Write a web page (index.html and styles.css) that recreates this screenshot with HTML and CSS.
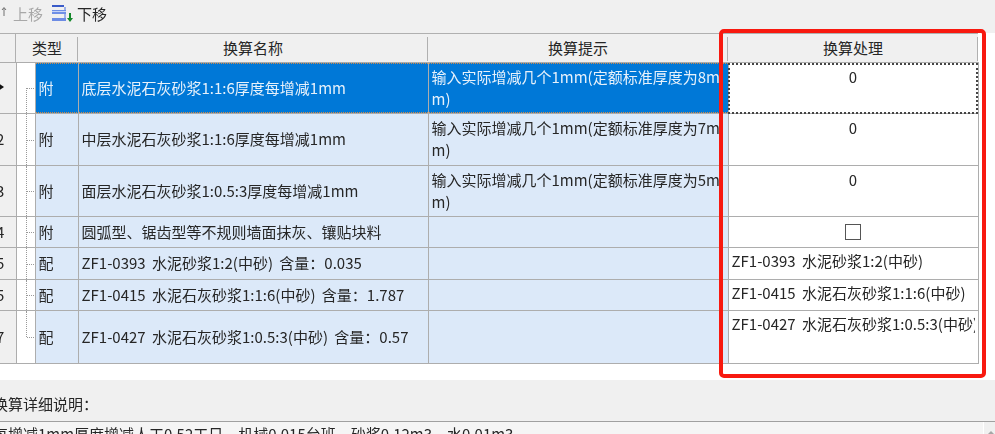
FILE: index.html
```html
<!DOCTYPE html>
<html lang="zh-CN">
<head>
<meta charset="utf-8">
<title>换算</title>
<link rel="stylesheet" href="styles.css">
</head>
<body>
<div class="toolbar">
  <svg class="tool-icon up" width="10" height="14" viewBox="0 0 10 14"><path d="M0 5h2v7H0z" fill="#c4c4c4"/><path d="M6 10V2M4 4l2-2.500 2 2.500" stroke="#707070" fill="none"/></svg>
  <span class="tool disabled">上移</span>
  <svg class="tool-icon down" width="21" height="17" viewBox="0 0 21 17"><path d="M0 0h12v2H0z" fill="#3a5bc8"/><path d="M0 5h14v4H0z" fill="#6f8fe6"/><path d="M0 6h14v1H0z" fill="#c6d4f6"/><path d="M12 2h2v3h-2zM12 9h2v5h-2z" fill="#9db1ea"/><path d="M0 13h14v3H0z" fill="#6d8ce4"/><path d="M18 8v6" stroke="#14882a" stroke-width="2"/><path d="M15 13h6l-3 4z" fill="#14882a"/></svg>
  <span class="tool">下移</span>
</div>
<div class="grid-wrap">
  <table class="grid">
    <colgroup>
      <col class="c-num"><col class="c-tree"><col class="c-type"><col class="c-name"><col class="c-tip"><col class="c-val">
    </colgroup>
    <thead>
      <tr>
        <th class="num"></th>
        <th colspan="2">类型</th>
        <th>换算名称</th>
        <th>换算提示</th>
        <th>换算处理</th>
      </tr>
    </thead>
    <tbody>
      <tr class="h51 selected">
        <td class="num"><span class="arrow"></span></td>
        <td class="tree"><span class="branch first"></span></td>
        <td class="type">附</td>
        <td class="name">底层水泥石灰砂浆1:1:6厚度每增减1mm</td>
        <td class="tip">输入实际增减几个1mm(定额标准厚度为8mm)</td>
        <td class="val center focus">0</td>
      </tr>
      <tr class="h52">
        <td class="num"><span>2</span></td>
        <td class="tree"><span class="branch"></span></td>
        <td class="type">附</td>
        <td class="name">中层水泥石灰砂浆1:1:6厚度每增减1mm</td>
        <td class="tip">输入实际增减几个1mm(定额标准厚度为7mm)</td>
        <td class="val center">0</td>
      </tr>
      <tr class="h51">
        <td class="num"><span>3</span></td>
        <td class="tree"><span class="branch"></span></td>
        <td class="type">附</td>
        <td class="name">面层水泥石灰砂浆1:0.5:3厚度每增减1mm</td>
        <td class="tip">输入实际增减几个1mm(定额标准厚度为5mm)</td>
        <td class="val center">0</td>
      </tr>
      <tr class="h31">
        <td class="num"><span>4</span></td>
        <td class="tree"><span class="branch"></span></td>
        <td class="type">附</td>
        <td class="name">圆弧型、锯齿型等不规则墙面抹灰、镶贴块料</td>
        <td class="tip"></td>
        <td class="val center mid"><span class="check"></span></td>
      </tr>
      <tr class="h32">
        <td class="num"><span>5</span></td>
        <td class="tree"><span class="branch"></span></td>
        <td class="type">配</td>
        <td class="name code">ZF1-0393 水泥砂浆1:2(中砂) 含量：0.035</td>
        <td class="tip"></td>
        <td class="val"><div class="clip">ZF1-0393 水泥砂浆1:2(中砂)</div></td>
      </tr>
      <tr class="h31">
        <td class="num"><span>5</span></td>
        <td class="tree"><span class="branch"></span></td>
        <td class="type">配</td>
        <td class="name code">ZF1-0415 水泥石灰砂浆1:1:6(中砂) 含量：1.787</td>
        <td class="tip"></td>
        <td class="val"><div class="clip">ZF1-0415 水泥石灰砂浆1:1:6(中砂)</div></td>
      </tr>
      <tr class="h53">
        <td class="num"><span>7</span></td>
        <td class="tree"><span class="branch last"></span></td>
        <td class="type">配</td>
        <td class="name code">ZF1-0427 水泥石灰砂浆1:0.5:3(中砂) 含量：0.57</td>
        <td class="tip"></td>
        <td class="val"><div class="clip">ZF1-0427 水泥石灰砂浆1:0.5:3(中砂)</div></td>
      </tr>
    </tbody>
  </table>
  <div class="highlight"></div>
</div>
<div class="detail">
  <div class="detail-label">换算详细说明：</div>
  <div class="detail-box">
    <div class="detail-text">每增减1mm厚度增减人工0.52工日、机械0.015台班、砂浆0.12m3、水0.01m3</div>
    <div class="scrollbar"><span class="scroll-up"></span></div>
  </div>
</div>
</body>
</html>
```
FILE: styles.css
```css
* { box-sizing: border-box; }
html, body { margin: 0; padding: 0; }
body {
  width: 995px;
  height: 434px;
  overflow: hidden;
  background: #fff;
  color: #262626;
  font-family: "Noto Sans CJK SC", "Noto Sans", sans-serif;
  font-size: 15px;
  filter: blur(0.35px);
}
.toolbar {
  height: 33px;
  background: #f0f0f0;
  display: flex;
  align-items: center;
  padding-bottom: 7px;
}
.tool-icon { flex: none; }
.tool-icon.up { margin-left: -2px; }
.tool { margin: 0 9px 0 5px; }
.tool.disabled { color: #a8a8a8; }
.tool-icon.down { margin-right: -1px; }
.grid-wrap {
  position: relative;
  height: 347px;
  background: #fff;
}
.grid {
  border-collapse: collapse;
  table-layout: fixed;
  width: 978px;
  border-top: 1px solid #b0b0b0;
}
.c-num { width: 16px; }
.c-tree { width: 19px; }
.c-type { width: 43px; }
.c-name { width: 350px; }
.c-tip { width: 300px; }
.c-val { width: 250px; }
th, td {
  border: 1px solid #adadad;
  padding: 0;
  overflow: hidden;
  font-weight: 400;
}
thead tr { height: 29px; }
th {
  position: relative;
  background: #f0f0f0;
  text-align: center;
  border-top: 0;
  border-left: 0;
  border-right: 0;
  overflow: visible;
  padding-bottom: 1px;
}
th::after {
  content: "";
  position: absolute;
  right: 0;
  top: 3px;
  bottom: 1px;
  border-right: 1px solid #b0b0b0;
}
th.num::after { top: 0; bottom: 0; }
th:first-child, td:first-child { border-left: 0; }
.h51 { height: 51px; }
.h31 { height: 31px; }
.h32 { height: 32px; }
.h52 { height: 52px; }
.h53 { height: 53px; }
td.num {
  background: #f0f0f0;
  text-align: left;
  padding-bottom: 2px;
}
td.num span { display: block; margin-left: -4px; }
td.num .arrow {
  width: 0;
  height: 0;
  margin-left: -3px;
  border-top: 5px solid transparent;
  border-bottom: 5px solid transparent;
  border-left: 7px solid #111;
}
.tree { background: #fff; position: relative; }
.branch {
  position: absolute;
  left: 9px;
  top: 0;
  bottom: 0;
  width: 9px;
  border-left: 1px dotted #999;
}
.branch::after {
  content: "";
  position: absolute;
  left: 0;
  top: 50%;
  width: 9px;
  border-top: 1px dotted #999;
}
.branch.first { top: 50%; }
.branch.first::after { top: 0; }
.branch.last { bottom: 50%; }
.branch.last::after { top: 100%; }
.type { background: #dce9f9; padding: 0 0 2px 3px; }
.name { background: #dce9f9; padding: 0 0 2px 3px; }
.code { word-spacing: 3px; }
.tip {
  background: #dce9f9;
  padding: 3px 0 0 3px;
  line-height: 22px;
  word-break: break-all;
  vertical-align: top;
}
.val {
  background: #fff;
  vertical-align: top;
  line-height: 26px;
  padding: 0 3px;
  word-spacing: 3px;
}
.val.center { text-align: center; padding-top: 1px; }
.val.mid { vertical-align: middle; padding-top: 0; }
.clip { white-space: nowrap; overflow: hidden; }
.selected .type, .selected .name, .selected .tip {
  background:
    repeating-linear-gradient(90deg, #d08a48 0 1px, transparent 1px 2px) top / 100% 1px no-repeat,
    repeating-linear-gradient(90deg, #d08a48 0 1px, transparent 1px 2px) bottom / 100% 1px no-repeat,
    #0078d7;
  color: #e6f1fb;
}
.focus { outline: 2px dotted #444; outline-offset: -2px; }
.check {
  display: block;
  width: 16px;
  height: 16px;
  margin: 0 auto;
  border: 1px solid #555;
}
.highlight {
  position: absolute;
  left: 719px;
  top: -4px;
  width: 267px;
  height: 349px;
  border: 4px solid #f8190f;
  border-radius: 5px;
  pointer-events: none;
}
.detail {
  background: #f0f0f0;
  height: 54px;
  overflow: hidden;
}
.detail-label {
  height: 41px;
  padding-top: 13px;
  margin-left: -7px;
  line-height: 22px;
}
.detail-box {
  display: flex;
  border-top: 1px solid #a0a0a0;
  background: #f5f5f5;
  height: 20px;
}
.detail-text {
  flex: 1;
  margin-left: -7px;
  line-height: 24px;
  white-space: nowrap;
}
.scrollbar {
  flex: none;
  width: 12px;
  background: #f0f0f0;
  border-left: 1px solid #fff;
  padding: 9px 0 0 3px;
}
.scroll-up {
  display: block;
  width: 0;
  height: 0;
  border-left: 4px solid transparent;
  border-right: 4px solid transparent;
  border-bottom: 4px solid #a6a6a6;
}
```
